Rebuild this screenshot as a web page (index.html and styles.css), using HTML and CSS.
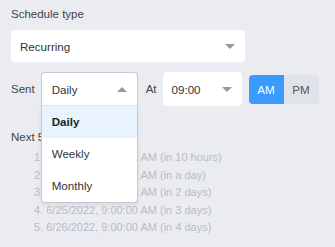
FILE: index.html
```html
<!DOCTYPE html>
<html lang="en">
<head>
    <meta charset="UTF-8">
    <title>Schedule</title>
    <link rel="stylesheet" href="styles.css">
</head>
<body>
    <div class="label">Schedule type</div>
    <div class="select wide">
        <span>Recurring</span>
        <span class="caret"></span>
    </div>

    <div class="row">
        <span class="row-label">Sent</span>
        <div class="dropdown">
            <div class="select open">
                <span>Daily</span>
                <span class="caret up"></span>
            </div>
            <ul class="menu">
                <li class="active">Daily</li>
                <li>Weekly</li>
                <li>Monthly</li>
            </ul>
        </div>
        <span class="row-label">At</span>
        <div class="select time">
            <span>09:00</span>
            <span class="caret"></span>
        </div>
        <div class="toggle">
            <button class="on">AM</button>
            <button>PM</button>
        </div>
    </div>

    <div class="next">Next 5 runs:</div>
    <ol class="runs">
        <li>1. 6/22/2022, 9:00:00 AM (in 10 hours)</li>
        <li>2. 6/23/2022, 9:00:00 AM (in a day)</li>
        <li>3. 6/24/2022, 9:00:00 AM (in 2 days)</li>
        <li>4. 6/25/2022, 9:00:00 AM (in 3 days)</li>
        <li>5. 6/26/2022, 9:00:00 AM (in 4 days)</li>
    </ol>
</body>
</html>
```
FILE: styles.css
```css
body {
    margin: 0;
    padding: 6px 11px;
    background: #ebecf1;
    font-family: "Liberation Sans", Arial, sans-serif;
    font-size: 11.5px;
    color: #444;
}
.label {
    line-height: 16px;
    margin-bottom: 8px;
}
.select {
    display: flex;
    align-items: center;
    justify-content: space-between;
    box-sizing: border-box;
    background: #ffffff;
    border-radius: 4px;
    padding: 0 10px 0 9px;
    color: #333;
    font-size: 11.6px;
}
.select.wide {
    width: 234px;
    height: 32px;
}
.caret {
    width: 0;
    height: 0;
    border-left: 5px solid transparent;
    border-right: 5px solid transparent;
    border-top: 5px solid #999;
}
.caret.up {
    border-top: none;
    border-bottom: 5px solid #999;
}
.row {
    display: flex;
    align-items: center;
    margin-top: 10px;
    height: 34px;
}
.row-label {
    margin-right: 6px;
    color: #444;
}
.dropdown {
    position: relative;
    width: 97px;
    margin-right: 8px;
}
.select.open {
    height: 34px;
    border: 1px solid #c8c8ce;
    border-bottom-color: #e4e4e8;
    border-radius: 4px 4px 0 0;
    padding-left: 10px;
}
.menu {
    position: absolute;
    top: 34px;
    left: 0;
    right: 0;
    margin: 0;
    padding: 0;
    list-style: none;
    background: #ffffff;
    border: 1px solid #c8c8ce;
    border-top: none;
    border-radius: 0 0 4px 4px;
    box-shadow: 0 2px 4px rgba(0, 0, 0, 0.08);
}
.menu li {
    height: 32px;
    line-height: 32px;
    padding-left: 10px;
    color: #333;
    font-size: 11.6px;
}
.menu li.active {
    background: #e8f3fd;
    color: #222;
    font-weight: bold;
}
.select.time {
    width: 79px;
    height: 34px;
    margin-right: 7px;
}
.toggle {
    display: flex;
    border-radius: 4px;
    overflow: hidden;
    height: 29px;
}
.toggle button {
    width: 35px;
    border: none;
    padding: 0;
    background: #e1e3ea;
    color: #555;
    font-family: inherit;
    font-size: 11.6px;
}
.toggle button.on {
    background: #3a9bfc;
    color: #ffffff;
}
.next {
    margin-top: 23px;
    line-height: 16px;
    color: #444;
}
.runs {
    list-style: none;
    margin: 4px 0 0;
    padding-left: 23px;
    color: #b9bbc6;
    font-size: 11px;
    line-height: 17.5px;
}
```
